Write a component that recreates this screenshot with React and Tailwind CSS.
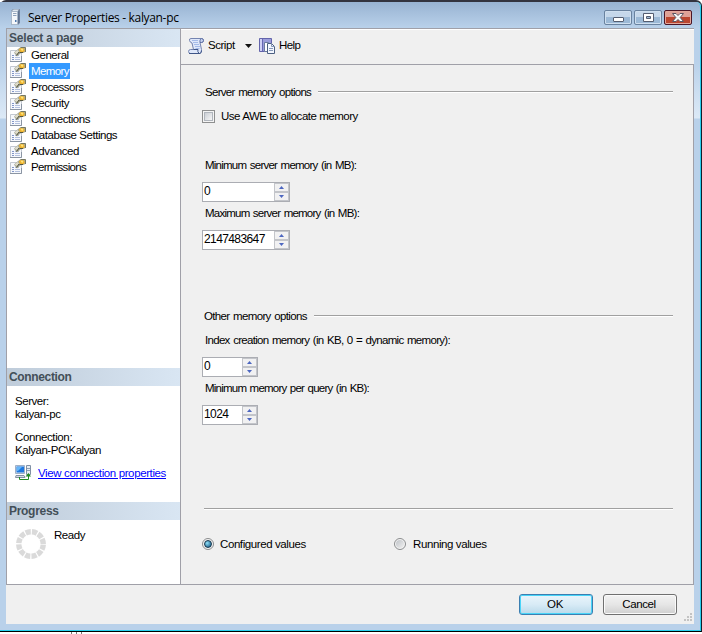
import React from "react";

const pages = [
  { name: "General", cls: "tracking-[-0.46px]" },
  { name: "Memory", cls: "tracking-[-0.6px]" },
  { name: "Processors", cls: "tracking-[-0.5px]" },
  { name: "Security", cls: "tracking-[-0.44px]" },
  { name: "Connections", cls: "tracking-[-0.45px]" },
  { name: "Database Settings", cls: "tracking-[-0.46px]" },
  { name: "Advanced", cls: "tracking-[-0.38px]" },
  { name: "Permissions", cls: "tracking-[-0.7px]" },
];

function PageIcon() {
  return (
    <svg width="16" height="16" viewBox="0 0 16 16" className="shrink-0">
      <path d="M.5 3.500h11v11H.5z" fill="#f6f8fc" stroke="#c3c8d0" />
      <path d="M0 14.500h11.500V9" fill="none" stroke="#8b95a3" />
      <path d="M2 8.500h2M2 10.500h2M2 12.500h2" stroke="#8196c8" />
      <path d="M5 8.500h4M5 10.500h5M5 12.500h5" stroke="#b3c0de" />
      <path d="M4 5.500L8 2l2-1.500h5.500V5L13 6H11L7 9.500 5 7z" fill="#a9aa98" />
      <path d="M4.500 5.500L7.500 3 9 4.500 7 7z" fill="#dedccb" />
      <path d="M10.500.500h5V5" fill="none" stroke="#77785f" />
      <path d="M9 2l2-1 3 .5.800 2.500L12.500 5.500 9.500 4.500z" fill="#efb32c" />
      <path d="M10.500 1.800l2-.300L13.500 3 12 4z" fill="#ffe680" />
      <path d="M9 5l-2.500 3.500M9.500 5.500h3.500" stroke="#54553f" fill="none" />
    </svg>
  );
}

function ServerIcon() {
  return (
    <svg width="16" height="16" viewBox="0 0 16 16" className="shrink-0">
      <path d="M4 2l2-2h7v14l-2 2H4z" fill="#7d8ca3" />
      <path d="M4.500 2.500h6v13h-6z" fill="#f4f7fb" stroke="#a9b8ca" />
      <path d="M5 2l1.500-1.500H12L10.500 2z" fill="#dfe7f0" />
      <path d="M11 2.500l1.500-1.500v12.500L11 15z" fill="#5f7391" />
      <path d="M6 4.500h3.500M6 6.500h3.500" stroke="#8fa2bb" />
      <path d="M8 11h1.500v2H8z" fill="#4e79ad" />
    </svg>
  );
}

function ScriptIcon() {
  return (
    <svg width="16" height="16" viewBox="0 0 16 16" className="shrink-0">
      <path d="M3 .500h10.500q2 .2 2 2t-2 2H12l1.500 7q.6 3.500-2 4H2.500Q.5 15.300.5 13.500t2-2h3L4 5Q2 4.500 1.500 2.500T3 .500z" fill="#dfe8fa" stroke="#7484b0" />
      <path d="M12 4.500V2.500q.2-1.500 1.500-2 2 .2 2 2t-2 2z" fill="#c3d0ee" stroke="#5c6da0" />
      <path d="M4 2.500h6M5 4.500h5M6 6.500h5M7 8.500h5M7.500 10.500h4" stroke="#a5bbe8" />
      <path d="M5.500 11.500h4.500q-.8 2 1 4M1 15.500h11q1.500-.5 1.500-3" fill="none" stroke="#3f5688" />
    </svg>
  );
}

function HelpIcon() {
  return (
    <svg width="16" height="16" viewBox="0 0 16 16" className="shrink-0">
      <path d="M.5.500h12v13H.5z" fill="#9a9cda" stroke="#6364ab" />
      <path d="M1 1h2v12H1z" fill="#cfd0f4" />
      <path d="M3.500 1v12" stroke="#6668b2" />
      <path d="M5.500 4.500h4l2 2v7h-6z" fill="#fff" stroke="#6b7ba0" />
      <path d="M8.500 5.500h4l3 3v7h-7z" fill="#f3f7ff" stroke="#4c6082" />
      <path d="M12.500 5.500v3h3M10 10.500h4M10 12.500h4" fill="none" stroke="#8799b8" />
    </svg>
  );
}

function ConnectionIcon() {
  return (
    <svg width="16" height="16" viewBox="0 0 16 16" className="shrink-0">
      <path d="M.5.500h9v8h-9z" fill="#d7e4f2" stroke="#9fb0c6" />
      <path d="M1.500 1.500h7.500v6H1.500z" fill="#1f78e0" />
      <path d="M2 2h5L3 6H2z" fill="#64b6f8" />
      <path d="M1 10.500h8l1 2H.5z" fill="#d5dbe3" stroke="#8290a2" />
      <path d="M11.500.500h4v9h-4z" fill="#e7ecf2" stroke="#8190a5" />
      <path d="M12 3.500h3M12 5.500h3" stroke="#8fa0b5" />
      <path d="M4.500 12v2.500h9V10" fill="none" stroke="#218a21" />
      <path d="M10.500 11.500l3-3.500 2.500 3.500z" fill="#218a21" />
    </svg>
  );
}

function ProgressRing() {
  return (
    <svg width="30" height="30" viewBox="0 0 30 30" className="shrink-0">
      <circle cx="15" cy="15" r="12.250" fill="none" stroke="#dadada" strokeWidth="5.400" strokeDasharray="5.214 1.200" strokeDashoffset="-0.600" />
    </svg>
  );
}

function SectionHeader({ children, cls }) {
  return (
    <div className="h-[18px] shrink-0 bg-linear-to-r from-[#bfccda] to-[#d9e6f3] pl-[2px] text-[12px] leading-[18px] font-bold text-[#434f58]">
      <span className={cls}>{children}</span>
    </div>
  );
}

function Spinner({ value, cls, textCls }) {
  return (
    <div className={`flex h-5 shrink-0 border border-[#abadb3] bg-white ${cls}`}>
      <span className={`flex-1 pl-[1px] text-[12px] leading-[16px] ${textCls}`}>{value}</span>
      <div className="flex h-[18px] w-[15px] flex-col justify-between bg-[#c3c5ca] p-px">
        <div className="flex h-[7px] items-center justify-center bg-[#f1f1f2]">
          <svg width="5" height="3" viewBox="0 0 5 3">
            <path d="M0 3L2.500 0 5 3z" fill="#4c66c0" />
          </svg>
        </div>
        <div className="flex h-[7px] items-center justify-center bg-[#f1f1f2]">
          <svg width="5" height="3" viewBox="0 0 5 3">
            <path d="M0 0l2.500 3L5 0z" fill="#4c66c0" />
          </svg>
        </div>
      </div>
    </div>
  );
}

function Rule({ cls }) {
  return <div className={`h-[2px] shrink-0 border-t border-[#a0a0a0] bg-white ${cls}`} />;
}

function TitleBar() {
  return (
    <div className="flex h-[26px] shrink-0 pl-[7px]">
      <div className="flex flex-1 pt-[7px]">
        <ServerIcon />
        <span className="ml-[5px] font-['Open_Sans',sans-serif] text-[12px] leading-[17px] tracking-[-0.33px]">
          Server Properties - kalyan-pc
        </span>
      </div>
      <div className="mt-2 mr-[8px] flex h-[15px] gap-[2px]">
        <div className="flex w-7 items-center justify-center rounded-[2px] border border-[#69829f] bg-linear-to-b from-[#c5d7ea] from-50% to-[#9cb9d6] to-50% shadow-[inset_0_0_0_1px_#cfdfef]">
          <div className="mt-1 h-[5px] w-[11px] rounded-[1px] border border-[#545d70] bg-white" />
        </div>
        <div className="flex w-7 items-center justify-center rounded-[2px] border border-[#69829f] bg-linear-to-b from-[#c5d7ea] from-50% to-[#9cb9d6] to-50% shadow-[inset_0_0_0_1px_#cfdfef]">
          <svg width="11" height="9" viewBox="0 0 11 9">
            <path d="M.5.500h10v8H.5z" fill="#fff" stroke="#545d70" />
            <path d="M3.500 3.500h4v2h-4z" fill="#9fb9d4" stroke="#545d70" />
          </svg>
        </div>
        <div className="flex w-7 items-center justify-center rounded-[2px] border border-[#4b1526] bg-linear-to-b from-[#dfa197] from-50% to-[#bb4630] to-50% shadow-[inset_0_0_0_1px_#e3a89c]">
          <svg width="12" height="9" viewBox="0 0 12 9">
            <path d="M.5.500h3.500L6 2.500 8 .500h3.500L8.200 4.500l3.300 4H8L6 6.500l-2 2H.5l3.300-4z" fill="#f8f8f8" stroke="#5a5663" />
          </svg>
        </div>
      </div>
    </div>
  );
}

export default function App() {
  return (
    <div className="h-[634px] w-[702px] overflow-hidden bg-white font-['Liberation_Sans',Arial,sans-serif] text-[11.5px] text-black">
      <div className="flex h-[632px] flex-col rounded-t-[6px] border-t-2 border-r border-b border-t-[#33343f] border-r-[#10202c] border-b-black bg-[#b9d1ea]">
        <div className="flex flex-1 flex-col rounded-tr-[5px] border-r border-b border-[#28d0ee] bg-[linear-gradient(#98b3d2_0px,#b9d1ea_26px,#b9d1ea_60px,#dce9f6_116px,#b9d1ea_117px)]">
          <TitleBar />
          <div className="mr-[6px] ml-[6px] flex h-[596px] flex-col bg-[#f0f0f0]">
            <div className="flex h-[557px] border-b border-l border-[#a0a0a8]">
              <div className="flex w-[174px] flex-col border-t border-r border-[#a0a0a8] bg-white">
                <SectionHeader cls="tracking-[-0.2px]">Select a page</SectionHeader>
                <div className="flex h-[321px] flex-col pl-[3px]">
                  {pages.map((page) => (
                    <div key={page.name} className="flex h-4 items-center">
                      <PageIcon />
                      <span
                        className={`ml-[3px] h-4 pr-[1px] pl-[2px] leading-4 ${page.cls} ${
                          page.name === "Memory" ? "bg-[#3399ff] text-white" : ""
                        }`}
                      >
                        {page.name}
                      </span>
                    </div>
                  ))}
                </div>
                <SectionHeader cls="tracking-[-0.35px]">Connection</SectionHeader>
                <div className="flex h-[116px] flex-col pt-[9px] pl-2 leading-[13px]">
                  <span className="tracking-[-0.47px]">Server:</span>
                  <span className="tracking-[-0.4px]">kalyan-pc</span>
                  <span className="mt-[10px] tracking-[-0.38px]">Connection:</span>
                  <span className="tracking-[-0.47px]">Kalyan-PC\Kalyan</span>
                  <div className="mt-[8px] flex items-center">
                    <ConnectionIcon />
                    <span className="ml-[7px] tracking-[-0.38px] text-[#0000ff] underline">View connection properties</span>
                  </div>
                </div>
                <SectionHeader cls="tracking-[-0.3px]">Progress</SectionHeader>
                <div className="flex pt-[9px] pl-[9px]">
                  <ProgressRing />
                  <span className="ml-2 leading-[13px] tracking-[-0.46px]">Ready</span>
                </div>
              </div>

              <div className="flex flex-1 flex-col border-t border-[#a0a0a8]">
                {/* toolbar */}
                <div className="flex h-[36px] items-center border-t border-b border-t-white border-b-[#a0a0a8] pb-[3px] pl-[7px]">
                  <ScriptIcon />
                  <span className="ml-1 w-[37px] tracking-[-0.46px]">Script</span>
                  <svg width="7" height="4" viewBox="0 0 7 4">
                    <path d="M0 0h7L3.500 4z" fill="#111" />
                  </svg>
                  <div className="w-[7px]" />
                  <HelpIcon />
                  <span className="ml-1 tracking-[-0.55px]">Help</span>
                </div>

                <div className="flex flex-1 flex-col border-r border-[#a0a0a8] pr-[20px] pl-[21px]">
                  <div className="mt-[20px] flex h-[14px] shrink-0 items-center pl-[3px]">
                    <span className="pt-[2px] tracking-[-0.7px] [word-spacing:1px]">Server memory options</span>
                    <Rule cls="ml-[7px] flex-1" />
                  </div>
                  <div className="mt-[10px] flex h-[14px] shrink-0 items-center">
                    <div className="flex size-[13px] items-center justify-center border border-[#8e8f8f] bg-[#f4f4f4]">
                      <div className="size-[9px] border border-[#b0b5bc] bg-linear-to-br from-[#cbcfd5] to-[#f6f6f6]" />
                    </div>
                    <span className="ml-[6px] pt-[2px] tracking-[-0.47px]">Use AWE to allocate memory</span>
                  </div>
                  <span className="mt-[35px] pl-[3px] leading-[14px] tracking-[-0.76px] [word-spacing:1px]">Minimum server memory (in MB):</span>
                  <Spinner value="0" cls="mt-[10px] w-[88px]" textCls="" />
                  <span className="mt-[4px] pl-[3px] leading-[14px] tracking-[-0.77px] [word-spacing:1px]">Maximum server memory (in MB):</span>
                  <Spinner value="2147483647" cls="mt-[10px] w-[88px]" textCls="tracking-[-0.6px]" />

                  <div className="mt-[59px] flex h-[14px] shrink-0 items-center pl-[2px]">
                    <span className="pt-[2px] tracking-[-0.65px] [word-spacing:1px]">Other memory options</span>
                    <Rule cls="ml-[7px] flex-1" />
                  </div>
                  <span className="mt-[10px] pl-[3px] leading-[14px] tracking-[-0.7px] [word-spacing:1px]">Index creation memory (in KB, 0 = dynamic memory):</span>
                  <Spinner value="0" cls="mt-[10px] w-[56px]" textCls="" />
                  <span className="mt-[4px] pl-[3px] leading-[14px] tracking-[-0.78px] [word-spacing:1px]">Minimum memory per query (in KB):</span>
                  <Spinner value="1024" cls="mt-[10px] w-[56px]" textCls="tracking-[-0.6px]" />

                  <Rule cls="mt-[83px] ml-[2px]" />
                  <div className="mt-[27px] flex h-[14px] shrink-0 items-center">
                    <div className="flex size-3 items-center justify-center rounded-full border border-[#8a8c8e] bg-[#f4f4f4]">
                      <div className="size-2 rounded-full border border-[#16364d] bg-radial-[at_35%_35%] from-[#8fe0f8] to-[#0a4b79]" />
                    </div>
                    <span className="ml-[6px] w-[174px] pt-px tracking-[-0.41px]">Configured values</span>
                    <div className="flex size-3 items-center justify-center rounded-full border border-[#8a8c8e] bg-[#f4f4f4]">
                      <div className="size-2 rounded-full bg-linear-to-br from-[#bfc3c8] to-[#f0f0f0]" />
                    </div>
                    <span className="ml-[7px] pt-px tracking-[-0.4px]">Running values</span>
                  </div>
                </div>
              </div>
            </div>

            <div className="flex h-[39px] justify-end gap-[10px] pt-[9px]">
              <div className="flex h-[21px] w-[74px] items-center justify-center rounded-[3px] border border-[#3c7fb1] bg-linear-to-b from-[#eaf5fb] via-[#d8ebf6] via-50% to-[#b9d9ea] pr-[2px] shadow-[inset_0_0_0_1px_#48d4f8]">
                <span className="pt-px tracking-[-0.2px]">OK</span>
              </div>
              <div className="flex h-[21px] w-[74px] items-center justify-center rounded-[3px] border border-[#707070] bg-linear-to-b from-[#f2f2f2] via-[#e6e6e6] via-50% to-[#cfcfcf] pr-[2px] shadow-[inset_0_0_0_1px_#fafafa]">
                <span className="pt-px tracking-[-0.4px]">Cancel</span>
              </div>
              {/* resize grip */}
              <svg width="9" height="9" viewBox="0 0 9 9" className="mt-[19px] mr-px -ml-[3px]">
                <path d="M6 0h2v2H6zM3 3h2v2H3zM6 3h2v2H6zM0 6h2v2H0zM3 6h2v2H3zM6 6h2v2H6z" fill="#c3c3c3" />
              </svg>
            </div>
          </div>
        </div>
      </div>
      <div className="ml-[71px] flex h-[2px] gap-1">
        <div className="w-px bg-[#777]" />
        <div className="w-px bg-[#777]" />
        <div className="w-px bg-[#777]" />
      </div>
    </div>
  );
}
